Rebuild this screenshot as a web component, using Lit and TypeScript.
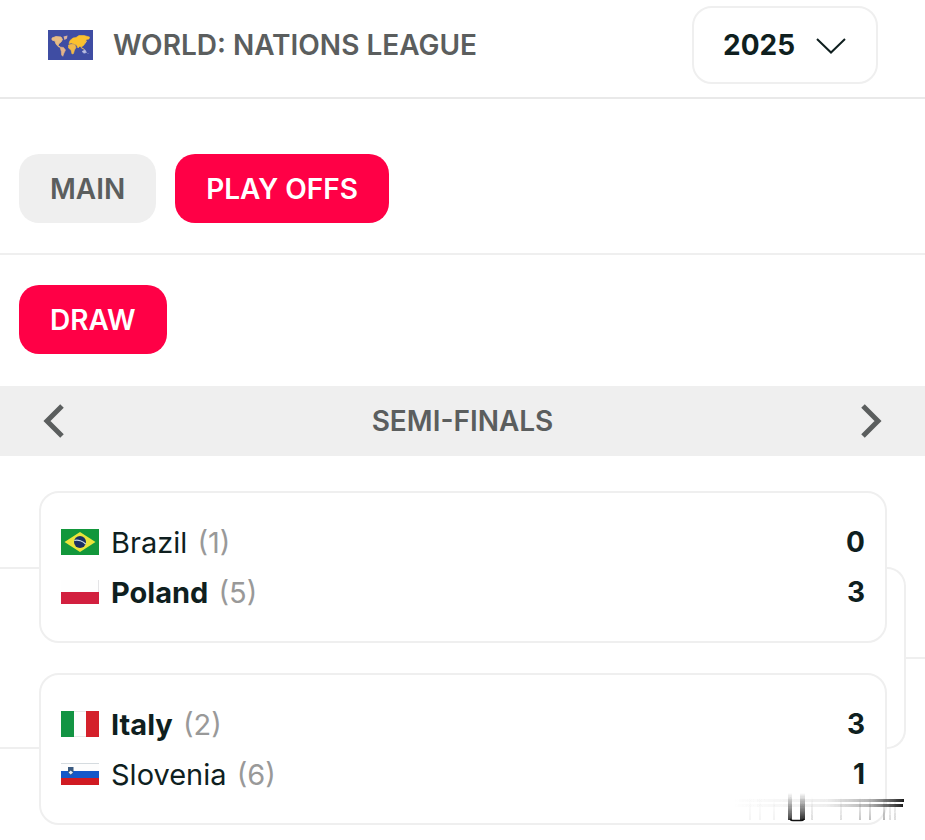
import { LitElement, html, svg, css, nothing, type TemplateResult } from "lit";
import { customElement, property, state } from "lit/decorators.js";
import { classMap } from "lit/directives/class-map.js";

interface Team {
  name: string;
  seed: number;
  score: number;
  flag: string;
}

const flags: Record<string, TemplateResult> = {
  brazil: html`<svg width="38" height="26" viewBox="0 0 38 26" aria-hidden="true">
    <rect width="38" height="26" fill="#12973b" />
    <path d="M3.500 13 19 3 34.500 13 19 23z" fill="#e9e43a" />
    <circle cx="19" cy="13" r="6" fill="#1b2f63" />
    <path d="M13.300 11.500C17 10.500 22 12 24.600 15" fill="none" stroke="#c9dbe6" stroke-width="1.200" />
  </svg>`,
  poland: html`<svg width="38" height="24" viewBox="0 0 38 24" aria-hidden="true">
    <rect width="38" height="24" fill="#fefefe" />
    <path d="M37.500 0V12" stroke="#e4e4e6" />
    <rect y="12" width="38" height="12" fill="#d2203f" />
  </svg>`,
  italy: html`<svg width="38" height="26" viewBox="0 0 38 26" aria-hidden="true">
    <rect width="38" height="26" fill="#fdfdfd" />
    <path d="M12 .5H26M12 25.500H26" stroke="#e8e8e8" />
    <rect width="13" height="26" fill="#129443" />
    <rect x="25" width="13" height="26" fill="#d4202a" />
  </svg>`,
  slovenia: html`<svg width="38" height="22" viewBox="0 0 38 22" aria-hidden="true">
    <rect width="38" height="22" fill="#fdfdfd" />
    <path d="M0 .5H38" stroke="#d5dbdf" />
    <rect y="8" width="38" height="7" fill="#1557c8" />
    <rect y="15" width="38" height="7" fill="#d01a22" />
    <path d="M7 4H12.500V8.500Q12.500 11 9.700 12 7 11 7 8.500z" fill="#3a5a80" />
    <path d="M7.600 9.500 9.700 7.500 12 9.500 9.700 11.400z" fill="#e8eef2" />
  </svg>`,
};

const worldMap = html`<svg class="world" width="45" height="30" viewBox="0 0 45 30" aria-hidden="true">
  <rect width="45" height="30" fill="#3f4da3" />
  <path d="M4 8 8 6.500 13 7 14.500 9.500 13 12 11 13.500 10 15.500 12 17 10.500 16.800 8 14 7 11 4 10z" fill="#e8bd84" stroke="#e8bd84" stroke-width=".8" />
  <path d="M15.500 6.500 19.500 5.500 19 8.500 16.500 10z" fill="#d9b3a0" />
  <path d="M12 17 15.500 17.500 17.500 20 16 23 14.800 26.300 13.600 25 13.300 21.500z" fill="#e3b389" stroke="#e3b389" stroke-width=".6" />
  <path d="M20.500 15 24 14 27 15 28 17.500 26.500 20 25.500 23.500 24 24 23 20 20.500 18z" fill="#f0b94a" stroke="#f0b94a" stroke-width=".6" />
  <path d="M21 13.500 22 10.500 25 8 28 7.500 31 5.500 36 5.500 41.500 7 41 9 38.500 9.500 37.500 12 36 15 33.500 17 31.500 16.500 30 18 28.500 15 26 14 23.500 13z" fill="#fbc12e" stroke="#fbc12e" stroke-width=".6" />
  <path d="M33 17.500 36.500 19.500M37 13.500 38.500 11" stroke="#f2bd55" fill="none" />
  <path d="M34 21.500 37 19.800 38.500 22.500 36 23.300zM39.500 24 40.500 23" fill="#b9bde0" stroke="#b9bde0" stroke-width=".5" />
</svg>`;

const ghostTicks: [number, number][] = [
  [18, 0.04], [28, 0.04], [42, 0.05], [80, 0.14], [109, 0.14], [128, 0.26],
  [138, 0.28], [152, 0.32], [158, 0.14], [163, 0.16],
];

const ghost = html`<svg class="ghost" width="176" height="34" viewBox="0 0 176 34" aria-hidden="true">
  <defs>
    <linearGradient id="across">
      <stop offset="0" stop-color="#555" stop-opacity="0" />
      <stop offset=".55" stop-color="#555" stop-opacity=".1" />
      <stop offset=".8" stop-color="#444" stop-opacity=".4" />
      <stop offset="1" stop-color="#111" stop-opacity=".95" />
    </linearGradient>
    <linearGradient id="down" x2="0" y2="1">
      <stop offset="0" stop-color="#222" stop-opacity="0" />
      <stop offset="1" stop-color="#222" />
    </linearGradient>
    <filter id="soft" x="-5%" y="-10%" width="110%" height="120%">
      <feGaussianBlur stdDeviation=".7" />
    </filter>
  </defs>
  <g filter="url(#soft)">
    <rect x="2" y="7" width="171" height="3" fill="url(#across)" />
    <rect x="2" y="12" width="170" height="3" fill="url(#across)" />
    ${ghostTicks.map(([x, o]) => svg`<rect x=${x} y="5" width="2" height="23" fill="url(#down)" opacity=${o} />`)}
    <rect x="57" y="1" width="4" height="27" fill="url(#down)" opacity=".85" />
    <rect x="69" y="1" width="5" height="27" fill="url(#down)" opacity=".95" />
  </g>
  <path d="M59 27Q60 28.500 62 28.500H70Q72 28.500 73 27" fill="none" stroke="#111" stroke-width="1.500" />
</svg>`;

@customElement("match-card")
export class MatchCard extends LitElement {
  @property({ attribute: false }) teams: Team[] = [];

  static styles = css`
    :host {
      display: block;
      box-sizing: border-box;
      padding: 24px 20px;
      border: 2px solid #efefef;
      border-radius: 20px;
      background: #fff;
    }
    .teams {
      list-style: none;
      margin: 0;
      padding: 0;
    }
    .team {
      display: grid;
      grid-template-columns: 38px 1fr auto;
      align-items: center;
      column-gap: 12px;
      height: 50px;
      color: #0f1f1f;
      font-size: 29px;
    }
    .winner .name {
      font-weight: 700;
    }
    .seed {
      margin-left: 2px;
      color: #999;
      font-weight: 400;
    }
    .score {
      font-size: 28px;
      font-weight: 700;
    }
    svg {
      display: block;
    }
  `;

  render() {
    const best = Math.max(...this.teams.map((t) => t.score));
    return html`<ul class="teams">
      ${this.teams.map(
        (t) => html`<li class=${classMap({ team: true, winner: t.score === best })}>
          ${flags[t.flag]}
          <span><span class="name">${t.name}</span> <span class="seed">(${t.seed})</span></span>
          <span class="score">${t.score}</span>
        </li>`
      )}
    </ul>`;
  }
}

@customElement("app-root")
export class AppRoot extends LitElement {
  @state() private stage = "PLAY OFFS";

  private matches: Team[][] = [
    [
      { name: "Brazil", seed: 1, score: 0, flag: "brazil" },
      { name: "Poland", seed: 5, score: 3, flag: "poland" },
    ],
    [
      { name: "Italy", seed: 2, score: 3, flag: "italy" },
      { name: "Slovenia", seed: 6, score: 1, flag: "slovenia" },
    ],
  ];

  static styles = css`
    :host {
      display: block;
      min-height: 100vh;
      background: #fff;
      font-family: Inter, "Liberation Sans", sans-serif;
      font-size: 28px;
      color: #0f1f1f;
    }
    svg {
      display: block;
    }
    .header {
      display: flex;
      align-items: center;
      gap: 20px;
      padding: 6px 47px 13px 48px;
      border-bottom: 2px solid #e9e9e9;
    }
    .title {
      flex: 1;
      margin: 0;
      font-size: 28px;
      font-weight: 600;
      color: #5b5e5e;
    }
    .season {
      position: relative;
    }
    .season select {
      appearance: none;
      display: block;
      width: 186px;
      height: 78px;
      padding: 0 29px;
      border: 2px solid #efefef;
      border-radius: 20px;
      background: #fff;
      color: #0f1f1f;
      font: inherit;
      font-weight: 700;
    }
    .season svg {
      position: absolute;
      top: 31px;
      right: 32px;
      pointer-events: none;
    }
    .chips {
      display: flex;
      gap: 19px;
      padding: 30px 19px;
    }
    .stages {
      padding-top: 55px;
      border-bottom: 2px solid #efefef;
    }
    .chips.views {
      padding-bottom: 32px;
    }
    .chip {
      height: 69px;
      padding: 0 31px;
      border: 0;
      border-radius: 20px;
      background: #efefef;
      color: #5b5e5e;
      font: inherit;
      font-weight: 600;
    }
    .chip.active {
      background: #ff0046;
      color: #fff;
    }
    .round {
      display: flex;
      align-items: center;
      justify-content: space-between;
      height: 70px;
      padding: 0 38px;
      background: #efefef;
      color: #5b5e5e;
    }
    .round h2 {
      margin: 0;
      font-size: 28px;
      font-weight: 600;
    }
    .arrow {
      padding: 0;
      border: 0;
      background: none;
      color: inherit;
    }
    .bracket {
      position: relative;
      display: grid;
      grid-template-columns: 39px 1fr 19px 19px;
      padding: 35px 0 15px;
    }
    .incoming,
    .joint {
      margin: 76px 0;
      border: 2px solid #efefef;
    }
    .incoming {
      border-width: 2px 0;
    }
    .joint {
      border-left: 0;
      border-radius: 0 20px 20px 0;
    }
    .outgoing {
      align-self: center;
      height: 2px;
      background: #efefef;
    }
    .matches {
      display: grid;
      gap: 30px;
    }
    .ghost {
      position: absolute;
      right: 18px;
      bottom: 14px;
    }
  `;

  private chip(label: string, active: boolean, pick?: () => void) {
    return html`<button
      class=${classMap({ chip: true, active })}
      aria-pressed=${active ? "true" : "false"}
      @click=${pick ?? nothing}
    >${label}</button>`;
  }

  private arrow(label: string, d: string) {
    return html`<button class="arrow" aria-label=${label}>
      <svg width="28" height="36" viewBox="0 0 28 36" aria-hidden="true">
        <path d=${d} fill="none" stroke="currentColor" stroke-width="5" />
      </svg>
    </button>`;
  }

  render() {
    return html`
      <header class="header">
        ${worldMap}
        <h1 class="title">WORLD: NATIONS LEAGUE</h1>
        <div class="season">
          <select aria-label="Season">
            <option>2025</option>
          </select>
          <svg width="30" height="18" viewBox="0 0 30 18" aria-hidden="true">
            <path d="M1 2 15 15.500 29 2" fill="none" stroke="#0f1f1f" stroke-width="2" />
          </svg>
        </div>
      </header>
      <nav class="chips stages" aria-label="Stage">
        ${["MAIN", "PLAY OFFS"].map((s) => this.chip(s, s === this.stage, () => (this.stage = s)))}
      </nav>
      <nav class="chips views" aria-label="View">${this.chip("DRAW", true)}</nav>
      <section>
        <div class="round">
          ${this.arrow("Previous round", "M24 3 9 18 24 33")}
          <h2>SEMI-FINALS</h2>
          ${this.arrow("Next round", "M4 3 19 18 4 33")}
        </div>
        <div class="bracket">
          <div class="incoming"></div>
          <div class="matches">
            ${this.matches.map((m) => html`<match-card .teams=${m}></match-card>`)}
          </div>
          <div class="joint"></div>
          <div class="outgoing"></div>
          ${ghost}
        </div>
      </section>
    `;
  }
}
